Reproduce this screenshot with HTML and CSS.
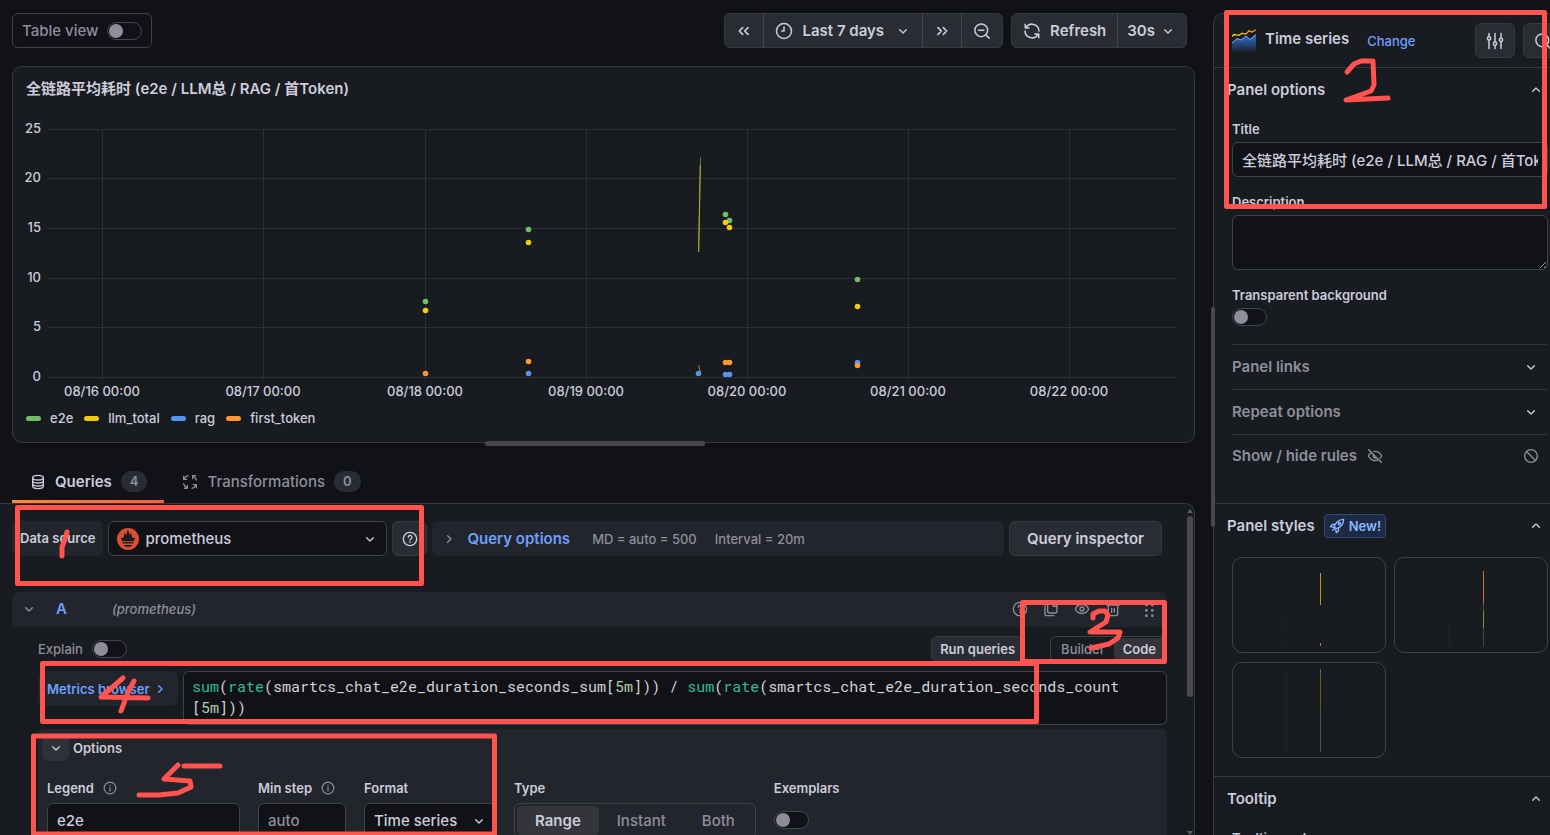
FILE: index.html
```html
<!DOCTYPE html>
<html lang="zh-CN">
<head>
<meta charset="UTF-8">
<meta name="viewport" content="width=device-width, initial-scale=1">
<title>Edit panel</title>
<link rel="stylesheet" href="styles.css">
</head>
<body>

<!-- Shared icons -->
<svg class="sprite" aria-hidden="true">
  <symbol id="i-down" viewBox="0 0 24 24"><path d="M7 10l5 5 5-5"/></symbol>
  <symbol id="i-up" viewBox="0 0 24 24"><path d="M7 14l5-5 5 5"/></symbol>
  <symbol id="i-right" viewBox="0 0 24 24"><path d="M10 7l5 5-5 5"/></symbol>
  <symbol id="i-dleft" viewBox="0 0 24 24"><path stroke-width="2.500" d="m10 7-5 5 5 5M18 7l-5 5 5 5"/></symbol>
  <symbol id="i-dright" viewBox="0 0 24 24"><path stroke-width="2.500" d="m6 7 5 5-5 5M14 7l5 5-5 5"/></symbol>
  <symbol id="i-clock" viewBox="0 0 24 24"><circle cx="12" cy="12" r="10"/><path d="M12 6.500V12H9"/></symbol>
  <symbol id="i-zoomout" viewBox="0 0 24 24"><circle cx="11" cy="11" r="8.500"/><path d="m17 17 4.500 4.500M7.500 11h7"/></symbol>
  <symbol id="i-search" viewBox="0 0 24 24"><circle cx="11" cy="11" r="8.500"/><path d="m17 17 4.500 4.500"/></symbol>
  <symbol id="i-sync" viewBox="0 0 24 24"><path d="M3 3v5h5M4 7.500A9.300 9.300 0 0 1 21.300 12M21 21v-5h-5M20 16.500A9.300 9.300 0 0 1 2.700 12"/></symbol>
  <symbol id="i-help" viewBox="0 0 24 24"><circle cx="12" cy="12" r="10"/><path d="M9.300 9.500a2.800 2.800 0 1 1 4 2.500c-.9.400-1.300.9-1.300 1.700M12 16.500v.6"/></symbol>
  <symbol id="i-info" viewBox="0 0 24 24"><circle cx="12" cy="12" r="10"/><path d="M12 11v6M12 7.300v.6"/></symbol>
  <symbol id="i-db" viewBox="0 0 24 24"><ellipse cx="12" cy="5.500" rx="8" ry="3.500"/><path d="M4 5.500v13C4 20.500 7.600 22 12 22s8-1.500 8-3.500v-13M4 10c0 2 3.600 3.500 8 3.500s8-1.500 8-3.500M4 14.500C4 16.500 7.600 18 12 18s8-1.500 8-3.500"/></symbol>
  <symbol id="i-process" viewBox="0 0 24 24"><path d="M2.500 3.500V8H7M3 7.500A10 10 0 0 1 9 2.500M20.500 2.500H16V7M16.500 3A10 10 0 0 1 21.500 9M21.500 20.500V16H17M21 16.500A10 10 0 0 1 15 21.500M3.500 21.500H8V17M7.500 21A10 10 0 0 1 2.500 15"/></symbol>
  <symbol id="i-copy" viewBox="0 0 24 24"><path d="M3 7v12a3 3 0 0 0 3 3h10M9 2h6l6 6v7a3 3 0 0 1-3 3h-8a3 3 0 0 1-3-3V4a2 2 0 0 1 2-2ZM15 2v6h6"/></symbol>
  <symbol id="i-eye" viewBox="0 0 24 24"><path d="M2 12c4-9 16-9 20 0-4 9-16 9-20 0Z"/><circle cx="12" cy="12" r="3"/></symbol>
  <symbol id="i-eyeoff" viewBox="0 0 24 24"><path d="M2.500 2.500l19 19M10.500 5.200C15 4.700 19.500 7 22 12a14 14 0 0 1-2.500 3.600M6.500 7A13 13 0 0 0 2 12c3 6 9 8.200 14.500 5.800M9.700 9.700a3.200 3.200 0 0 0 4.500 4.500"/></symbol>
  <symbol id="i-trash" viewBox="0 0 24 24"><path d="M2.500 6h19M8 6V4.500A2 2 0 0 1 10 2.500h4a2 2 0 0 1 2 2V6M5 6v13a3 3 0 0 0 3 3h8a3 3 0 0 0 3-3V6M10 11v6M14 11v6"/></symbol>
  <symbol id="i-grip" viewBox="0 0 24 24"><path class="dots" d="M8 6v.1M17 6v.1M8 14v.1M17 14v.1M8 22v.1M17 22v.1"/></symbol>
  <symbol id="i-ban" viewBox="0 0 24 24"><circle cx="12" cy="12" r="9.500"/><path d="m5.300 5.300 13.400 13.400"/></symbol>
  <symbol id="i-sliders" viewBox="0 0 24 24"><path d="M4 2v4M4 11v11M12 2v11M12 18v4M20 2v6M20 13v9"/><circle cx="4" cy="8.500" r="2.200"/><circle cx="12" cy="15.500" r="2.200"/><circle cx="20" cy="10.500" r="2.200"/></symbol>
  <symbol id="i-rocket" viewBox="0 0 24 24"><path d="M8 13c1.500-6 6-10.500 14-11-.3 8-5 12.500-11 14zM9 9.500l-4 .3L2 13l5 1M14.500 15l-.3 4L11 22l-1-5M8 16l-2.500 2.500"/><circle cx="15.500" cy="8.500" r="1.800"/></symbol>
</svg>

<div class="editor">
  <main class="main">
    <div class="topbar">
      <label class="table-view">Table view <input type="checkbox" class="switch"></label>
      <div class="tools">
        <div class="btn-group">
          <button class="btn" aria-label="Move back"><svg class="icon"><use href="#i-dleft"/></svg></button>
          <button class="btn btn-time"><svg class="icon icon-lg"><use href="#i-clock"/></svg><span>Last 7 days</span><svg class="icon"><use href="#i-down"/></svg></button>
          <button class="btn" aria-label="Move forward"><svg class="icon"><use href="#i-dright"/></svg></button>
          <button class="btn" aria-label="Zoom out"><svg class="icon icon-lg"><use href="#i-zoomout"/></svg></button>
        </div>
        <div class="btn-group">
          <button class="btn"><svg class="icon icon-lg"><use href="#i-sync"/></svg>Refresh</button>
          <button class="btn btn-interval">30s<svg class="icon"><use href="#i-down"/></svg></button>
        </div>
      </div>
    </div>

    <section class="panel">
      <h2 class="panel-title">全链路平均耗时 (e2e / LLM总 / RAG / 首Token)</h2>
      <svg class="chart" viewBox="0 0 1181 290" role="img" aria-label="Time series">
        <path class="grid" d="M35 17.500H1163M35 66.500H1163M35 116.500H1163M35 166.500H1163M35 215.500H1163M35 265.500H1163M89.500 17V268M250.500 17V268M412.500 17V268M573.500 17V268M734.500 17V268M895.500 17V268M1056.500 17V268"/>
        <g class="axis-y">
          <text x="28" y="21">25</text>
          <text x="28" y="70">20</text>
          <text x="28" y="120">15</text>
          <text x="28" y="170">10</text>
          <text x="28" y="219">5</text>
          <text x="28" y="269">0</text>
        </g>
        <g class="axis-x">
          <text x="89" y="284">08/16 00:00</text>
          <text x="250" y="284">08/17 00:00</text>
          <text x="412" y="284">08/18 00:00</text>
          <text x="573" y="284">08/19 00:00</text>
          <text x="734" y="284">08/20 00:00</text>
          <text x="895" y="284">08/21 00:00</text>
          <text x="1056" y="284">08/22 00:00</text>
        </g>
        <path class="line-e2e" d="M687.500 45 685.500 138"/>
        <path class="line-llm" d="M687.300 53 685.700 140"/>
        <path class="line-token" d="M685.500 253l2 8"/>
        <g class="e2e">
          <circle cx="412.500" cy="189.500" r="2.800"/><circle cx="515.500" cy="117.500" r="2.800"/><circle cx="712.500" cy="102.500" r="2.800"/><circle cx="716.500" cy="108.500" r="2.800"/><circle cx="844.500" cy="167.500" r="2.800"/>
        </g>
        <g class="llm">
          <circle cx="412.500" cy="198.500" r="2.800"/><circle cx="515.500" cy="130.500" r="2.800"/><circle cx="712.500" cy="110.500" r="2.800"/><circle cx="716.500" cy="115.500" r="2.800"/><circle cx="844.500" cy="194.500" r="2.800"/>
        </g>
        <g class="rag">
          <circle cx="515.500" cy="261.500" r="2.800"/><circle cx="685.500" cy="261.500" r="2.800"/><circle cx="712.500" cy="262.500" r="2.800"/><circle cx="716.500" cy="262.500" r="2.800"/><circle cx="844.500" cy="250.500" r="2.800"/>
        </g>
        <g class="token">
          <circle cx="412.500" cy="261.500" r="2.800"/><circle cx="515.500" cy="249.500" r="2.800"/><circle cx="712.500" cy="250.500" r="2.800"/><circle cx="716.500" cy="250.500" r="2.800"/><circle cx="844.500" cy="253.500" r="2.800"/>
        </g>
      </svg>
      <ul class="legend">
        <li><i class="swatch swatch-e2e"></i>e2e</li>
        <li><i class="swatch swatch-llm"></i>llm_total</li>
        <li><i class="swatch swatch-rag"></i>rag</li>
        <li><i class="swatch swatch-token"></i>first_token</li>
      </ul>
      <div class="resize-h"></div>
    </section>

    <div class="tabs" role="tablist">
      <button class="tab active" role="tab" aria-selected="true"><svg class="icon"><use href="#i-db"/></svg>Queries<span class="count">4</span></button>
      <button class="tab" role="tab" aria-selected="false"><svg class="icon"><use href="#i-process"/></svg>Transformations<span class="count">0</span></button>
    </div>

    <section class="queries">
      <div class="scroller">
        <div class="source-row">
          <label class="source-label" for="source">Data source</label>
          <div class="select source">
            <svg class="prom" viewBox="0 0 24 24" aria-hidden="true">
              <circle cx="12" cy="12" r="12" fill="#da4e31"/>
              <path fill="#181b1f" d="M6 14.500C4.500 12.700 4.700 11.500 4.500 10c1 1 1.800 1.200 2.600 1C7 8.500 8.500 7.500 8.300 5c1 .8 1.500 2 1.600 3.300C10.800 6.500 11 4.500 11.500 2c1.800 1.800 1.500 4 2.500 6 .2-1.200.5-2 1.100-2.800.2 2.300 1.600 3.300 1.800 5.800.9.100 1.800-.2 2.600-1-.2 1.500 0 2.700-1.500 4.500zM6 15.500h12v1.500H6zM7.500 18.500h9c-1.200 2.700-7.800 2.700-9 0z"/>
            </svg>
            <select id="source"><option>prometheus</option></select>
            <svg class="icon"><use href="#i-down"/></svg>
          </div>
          <button class="btn btn-square" aria-label="Data source help"><svg class="icon"><use href="#i-help"/></svg></button>
          <div class="query-options">
            <svg class="icon"><use href="#i-right"/></svg>
            <a href="#">Query options</a>
            <span>MD = auto = 500</span>
            <span>Interval = 20m</span>
          </div>
          <button class="btn btn-inspect">Query inspector</button>
        </div>

        <div class="query-head">
          <svg class="icon"><use href="#i-down"/></svg>
          <strong class="ref-id">A</strong>
          <em>(prometheus)</em>
          <div class="actions">
            <button aria-label="Help"><svg class="icon"><use href="#i-help"/></svg></button>
            <button aria-label="Duplicate"><svg class="icon"><use href="#i-copy"/></svg></button>
            <button aria-label="Hide response"><svg class="icon"><use href="#i-eye"/></svg></button>
            <button aria-label="Remove"><svg class="icon"><use href="#i-trash"/></svg></button>
            <button aria-label="Drag"><svg class="icon"><use href="#i-grip"/></svg></button>
          </div>
        </div>

        <div class="query-body">
          <div class="query-bar">
            <label class="explain">Explain <input type="checkbox" class="switch"></label>
            <button class="btn btn-sm">Run queries</button>
            <div class="radio radio-sm">
              <label><input type="radio" name="mode">Builder</label>
              <label><input type="radio" name="mode" checked>Code</label>
            </div>
          </div>

          <div class="code-row">
            <button class="metrics">Metrics browser<svg class="icon"><use href="#i-right"/></svg></button>
            <div class="code" role="textbox" aria-label="PromQL query" contenteditable="true" spellcheck="false"><span class="fn">sum</span>(<span class="fn">rate</span>(smartcs_chat_e2e_duration_seconds_sum[<span class="num">5m</span>])) / <span class="fn">sum</span>(<span class="fn">rate</span>(smartcs_chat_e2e_duration_seconds_count<br>[<span class="num">5m</span>]))</div>
          </div>

          <div class="options">
            <div class="options-head">
              <button aria-label="Collapse options"><svg class="icon"><use href="#i-down"/></svg></button>
              <span>Options</span>
            </div>
            <div class="fields">
              <div class="field field-legend">
                <label for="legend">Legend <svg class="icon"><use href="#i-info"/></svg></label>
                <input id="legend" class="input" type="text" value="e2e">
              </div>
              <div class="field field-step">
                <label for="step">Min step <svg class="icon"><use href="#i-info"/></svg></label>
                <input id="step" class="input" type="text" placeholder="auto">
              </div>
              <div class="field field-format">
                <label for="format">Format</label>
                <div class="select">
                  <select id="format"><option>Time series</option></select>
                  <svg class="icon"><use href="#i-down"/></svg>
                </div>
              </div>
              <div class="field">
                <span class="field-label">Type</span>
                <div class="radio">
                  <label><input type="radio" name="type" checked>Range</label>
                  <label><input type="radio" name="type">Instant</label>
                  <label><input type="radio" name="type">Both</label>
                </div>
              </div>
              <div class="field">
                <label for="exemplars">Exemplars</label>
                <input id="exemplars" type="checkbox" class="switch">
              </div>
            </div>
          </div>
        </div>
      </div>
      <div class="scrollbar"><i class="arrow-up"></i><i class="thumb"></i><i class="arrow-down"></i></div>
    </section>
  </main>

  <aside class="side">
    <div class="resize-v"></div>
    <div class="side-head">
      <svg class="viz" viewBox="0 0 24 24" aria-hidden="true">
        <defs><linearGradient id="area" x1="0" y1="0" x2="0" y2="1"><stop offset="0" stop-color="#3274d9"/><stop offset="1" stop-color="#3274d9" stop-opacity="0"/></linearGradient><linearGradient id="top"><stop offset="0" stop-color="#f2cc0c"/><stop offset="1" stop-color="#ff9830"/></linearGradient></defs>
        <path fill="url(#area)" d="M0 14 5 9.500l4 1.500 5-4 4 3.500 6-5V24H0z"/>
        <path fill="none" stroke="#84aff1" d="M0 14 5 9.500l4 1.500 5-4 4 3.500 6-5"/>
        <path fill="none" stroke="url(#top)" stroke-width="1.300" d="M0 7.500 2 5.500l5 .8 3-2 4 .8 3-3.300 3 1.200L24 .8"/>
      </svg>
      <h2>Time series</h2>
      <a href="#">Change</a>
      <div class="side-buttons">
        <button class="btn" aria-label="Options view"><svg class="icon icon-lg"><use href="#i-sliders"/></svg></button>
        <button class="btn" aria-label="Search options"><svg class="icon icon-lg"><use href="#i-search"/></svg></button>
      </div>
    </div>

    <section class="group">
      <h3 class="group-head">Panel options<svg class="icon"><use href="#i-up"/></svg></h3>
      <div class="group-body">
        <label class="side-label" for="title">Title</label>
        <input id="title" class="input" type="text" value="全链路平均耗时 (e2e / LLM总 / RAG / 首Token)">
        <label class="side-label spaced" for="description">Description</label>
        <textarea id="description" class="input"></textarea>
        <label class="side-label spaced" for="transparent">Transparent background</label>
        <input id="transparent" type="checkbox" class="switch">
        <div class="sub">Panel links<svg class="icon"><use href="#i-down"/></svg></div>
        <div class="sub">Repeat options<svg class="icon"><use href="#i-down"/></svg></div>
        <div class="sub sub-rules">Show / hide rules<svg class="icon"><use href="#i-eyeoff"/></svg><svg class="icon"><use href="#i-ban"/></svg></div>
      </div>
    </section>

    <section class="group">
      <h3 class="group-head">Panel styles<span class="badge"><svg class="icon"><use href="#i-rocket"/></svg>New!</span><svg class="icon"><use href="#i-up"/></svg></h3>
      <div class="presets">
        <button class="preset" aria-label="Style 1"><svg viewBox="0 0 152 94"><path stroke="#73bf69" d="M87.500 15v3"/><path stroke="#b39a12" d="M87.500 18v29"/><path stroke="#c4762b" d="M87.500 85v3"/><path stroke="#22302a" d="M53.500 63v1m0 2v1m0 20v1"/></svg></button>
        <button class="preset" aria-label="Style 2"><svg viewBox="0 0 152 94"><path stroke="#c4762b" d="M88.500 13v31"/><path stroke="#4a6d9c" d="M88.500 44v2"/><path stroke="#5c5018" d="M88.500 46v7"/><path stroke="#6f9740" d="M88.500 53v17"/><path stroke="#33532f" d="M88.500 70v19"/><path stroke="#212c25" d="M54.500 66v22"/></svg></button>
        <button class="preset" aria-label="Style 3"><svg viewBox="0 0 152 94"><path stroke="#4a6d9c" d="M87.500 6v5"/><path stroke="#6b581a" d="M87.500 11v36"/><path stroke="#3b6136" d="M87.500 47v42"/><path stroke="#1d2622" d="M53.500 7v82"/></svg></button>
      </div>
    </section>

    <section class="group">
      <h3 class="group-head">Tooltip<svg class="icon"><use href="#i-up"/></svg></h3>
      <div class="group-body">
        <span class="side-label">Tooltip mode</span>
      </div>
    </section>
  </aside>
</div>

<!-- Numbered walkthrough marks over the page -->
<svg class="marks" viewBox="0 0 1550 835" aria-hidden="true">
  <rect x="17.500" y="507.500" width="404" height="76"/>
  <rect x="1226.500" y="12.500" width="318" height="194"/>
  <rect x="1022.500" y="602.500" width="142" height="59"/>
  <rect x="42.500" y="663.500" width="994" height="58"/>
  <rect x="33.500" y="736" width="461" height="98"/>
  <path d="M67 532 65 539 62 547V556"/>
  <path d="M1347 72 1354 64 1361 61H1373L1374 85 1371 91 1346 100 1388 98"/>
  <path d="M1093 618V614L1099 611H1105L1108 615 1106 622 1090 632H1120L1118 638 1109 644 1091 648"/>
  <path d="M123 678 101 697 148 698M134 681 128 692 121 711"/>
  <path d="M220 766H184M178 765 164 779 190 781 191 787 178 793 159 795H139"/>
</svg>

</body>
</html>
```

FILE: styles.css
```css
* {
  box-sizing: border-box;
}

body {
  margin: 0;
  height: 100vh;
  overflow: hidden;
  position: relative;
  background: #111217;
  color: #ccccdc;
  font-family: Inter, "Noto Sans CJK SC", sans-serif;
  font-size: 15px;
  line-height: 20px;
}

button, input, select, textarea {
  font: inherit;
  color: inherit;
}

button {
  padding: 0;
  border: 0;
  background: none;
  cursor: pointer;
}

a {
  color: #6e9fff;
  text-decoration: none;
}

h2, h3 {
  margin: 0;
  font-size: 15px;
  font-weight: 600;
}

.sprite {
  display: none;
}

.icon {
  width: 16px;
  height: 16px;
  flex: none;
  fill: none;
  stroke: currentColor;
  stroke-width: 2;
  stroke-linecap: round;
  stroke-linejoin: round;
}

.icon-lg {
  width: 18px;
  height: 18px;
}

.dots {
  stroke-width: 4;
}

/* Layout */
.editor {
  display: grid;
  grid-template-columns: minmax(0, 1fr) 337px;
  gap: 18px;
  height: 100%;
}

.main {
  display: flex;
  flex-direction: column;
  min-width: 0;
  height: 100vh;
}

/* Controls */
.btn {
  display: flex;
  align-items: center;
  justify-content: center;
  height: 35px;
  padding: 0 11px;
  background: #2a2c33;
  border: 1px solid #37393f;
  border-radius: 6px;
  font-weight: 600;
}

.btn-group {
  display: flex;
}

.btn-group .btn {
  gap: 9px;
  border-radius: 0;
}

.btn-group .btn + .btn {
  border-left-color: #45474d;
  margin-left: -1px;
}

.btn-group .btn:first-child {
  border-radius: 6px 0 0 6px;
}

.btn-group .btn:last-child {
  border-radius: 0 6px 6px 0;
}

.btn-group .btn-interval {
  padding: 0 10px 0 9px;
  gap: 5px;
}

.switch {
  appearance: none;
  width: 35px;
  height: 18px;
  margin: 0;
  padding: 1px;
  background: #111217;
  border: 1px solid #44464c;
  border-radius: 9px;
  flex: none;
}

.switch::before {
  content: "";
  display: block;
  width: 14px;
  height: 14px;
  border-radius: 50%;
  background: #8e8e9b;
}

.input,
.select select {
  display: block;
  width: 100%;
  height: 35px;
  padding: 0 9px;
  background: #111217;
  border: 1px solid #404248;
  border-radius: 6px;
}

.side .input {
  font-weight: 500;
}

.input::placeholder {
  color: #8e8e9b;
  opacity: 1;
}

.select {
  position: relative;
}

.select select {
  appearance: none;
}

.select .icon {
  position: absolute;
  right: 9px;
  top: 10px;
  pointer-events: none;
}

.radio {
  display: flex;
  height: 35px;
  padding: 2px;
  border: 1px solid #404248;
  border-radius: 6px;
  color: #8e8e9b;
}

.radio label {
  display: flex;
  align-items: center;
  padding: 0 18px;
  border-radius: 4px;
  font-weight: 500;
}

.radio input {
  position: absolute;
  opacity: 0;
}

.radio label:has(:checked) {
  background: #33353b;
  color: #ccccdc;
  font-weight: 600;
}

/* Top bar */
.topbar {
  display: flex;
  justify-content: space-between;
  padding: 13px 8px 18px 12px;
}

.table-view {
  display: flex;
  align-items: center;
  gap: 9px;
  height: 35px;
  padding: 0 9px;
  border: 1px solid #404248;
  border-radius: 6px;
  color: #8e8e9b;
  font-weight: 500;
}

.tools {
  display: flex;
  gap: 8px;
}

.btn-time .icon:last-child {
  margin-left: 2px;
}

/* Chart panel */
.panel {
  position: relative;
  margin-left: 12px;
  height: 377px;
  flex: none;
  background: #181b1f;
  border: 1px solid #37393f;
  border-radius: 10px;
}

.panel-title {
  padding: 12px 13px 13px;
}

.chart {
  display: block;
  width: 100%;
  font-size: 13px;
  font-weight: 500;
}

.grid {
  stroke: #2d3033;
}

.axis-x, .axis-y {
  fill: #ccccdc;
}

.axis-x text {
  text-anchor: middle;
}

.axis-y text {
  text-anchor: end;
}

.e2e { fill: #73bf69; }
.llm { fill: #f2cc0c; }
.rag { fill: #5794f2; }
.token { fill: #ff9830; }

.line-e2e { stroke: #4d7f35; }
.line-llm { stroke: #c2ae2a; }
.line-token { stroke: #b87434; }

.legend {
  display: flex;
  gap: 11px;
  margin: 6px 13px 0;
  padding: 0;
  list-style: none;
  font-size: 13px;
  font-weight: 500;
}

.legend li {
  display: flex;
  align-items: center;
  gap: 9px;
}

.swatch {
  width: 15px;
  height: 5px;
  border-radius: 3px;
}

.swatch-e2e { background: #73bf69; }
.swatch-llm { background: #f2cc0c; }
.swatch-rag { background: #5794f2; }
.swatch-token { background: #ff9830; }

.resize-h {
  position: absolute;
  bottom: -4px;
  left: 40%;
  width: 220px;
  height: 5px;
  border-radius: 3px;
  background: #47484d;
}

/* Tabs */
.tabs {
  display: flex;
  flex: none;
  margin: 17px 0 0 12px;
}

.tab {
  display: flex;
  align-items: center;
  height: 43px;
  padding: 3px 17px 0 18px;
  border-bottom: 3px solid transparent;
  color: #8e8e9b;
  font-weight: 500;
}

.tab .icon {
  margin-right: 9px;
}

.tab.active {
  color: #ccccdc;
  font-weight: 600;
  border-image: linear-gradient(90deg, #ff8833, #f55f3e) 1;
}

.count {
  margin-left: 9px;
  padding: 0 9px;
  border-radius: 10px;
  background: #2a2c33;
  color: #8e8e9b;
  font-size: 13px;
  font-weight: 600;
  line-height: 21px;
}

/* Queries */
.queries {
  display: flex;
  flex: 1;
  min-height: 0;
  background: #181b1f;
  border: 1px solid #37393f;
  border-width: 1px 1px 0 0;
  border-radius: 0 10px 0 0;
}

.scroller {
  flex: 1;
  min-width: 0;
  padding: 17px 18px 0 12px;
  overflow: hidden;
}

.scrollbar {
  display: flex;
  flex-direction: column;
  align-items: center;
  gap: 3px;
  width: 9px;
  padding-top: 5px;
}

.arrow-up, .arrow-down {
  border: 3px solid transparent;
}

.arrow-up {
  border-top: 0;
  border-bottom: 4px solid #5b5d63;
}

.arrow-down {
  margin-top: auto;
  border-bottom: 0;
  border-top: 4px solid #5b5d63;
}

.thumb {
  width: 6px;
  height: 181px;
  border-radius: 3px;
  background: #4a4b51;
}

.source-row {
  display: flex;
  gap: 5px;
  padding-right: 5px;
}

.source-label {
  padding: 0 8px;
  border-radius: 6px;
  background: #22252b;
  font-size: 13px;
  font-weight: 600;
  line-height: 35px;
}

.source {
  width: 279px;
}

.source select {
  padding-left: 36px;
  font-weight: 500;
}

.prom {
  position: absolute;
  left: 9px;
  top: 7px;
  width: 22px;
  height: 22px;
  pointer-events: none;
}

.btn-square {
  width: 35px;
}

.query-options {
  display: flex;
  flex: 1;
  align-items: center;
  padding: 0 9px;
  border-radius: 6px;
  background: #22252b;
  color: #8e8e9b;
  font-size: 13px;
  font-weight: 500;
}

.query-options a {
  margin: 0 4px 0 10px;
  font-size: 15px;
  font-weight: 600;
}

.query-options span {
  margin-left: 18px;
}

.btn-inspect {
  padding: 0 17px;
}

.query-head {
  display: flex;
  align-items: center;
  height: 35px;
  margin-top: 36px;
  padding: 0 10px 1px 9px;
  border-radius: 6px;
  background: #22252b;
  color: #8e8e9b;
  font-size: 13px;
  font-weight: 500;
}

.ref-id {
  margin: 0 45px 0 19px;
  color: #6e9fff;
  font-size: 15px;
  font-weight: 600;
}

.actions {
  display: flex;
  gap: 15px;
  margin-left: auto;
}

.actions button {
  display: flex;
}

.actions button:last-child {
  margin-left: 5px;
}

.query-body {
  padding: 9px 0 0 26px;
}

.query-bar {
  display: flex;
  align-items: center;
  height: 26px;
  font-size: 13px;
}

.explain {
  display: flex;
  align-items: center;
  gap: 9px;
  margin-right: auto;
  color: #8e8e9b;
  font-weight: 500;
}

.btn-sm {
  height: 26px;
  padding: 0 8px;
}

.radio-sm {
  height: 26px;
  margin-left: 26px;
  padding: 1px;
}

.radio-sm label {
  padding: 0 9px;
}

.code-row {
  display: flex;
  align-items: flex-start;
  gap: 5px;
  margin-top: 9px;
}

.metrics {
  display: flex;
  align-items: center;
  gap: 2px;
  min-width: 140px;
  height: 35px;
  padding: 0 9px;
  border-radius: 6px;
  background: #22252b;
  color: #6e9fff;
  font-size: 13px;
  font-weight: 600;
  white-space: nowrap;
}

.code {
  flex: 1;
  min-width: 0;
  min-height: 54px;
  padding: 4px 8px;
  background: #111217;
  border: 1px solid #404248;
  border-radius: 6px;
  color: #d4d4d4;
  font-family: "Roboto Mono", "Liberation Mono", monospace;
  line-height: 21px;
}

.fn { color: #2dbd95; }
.num { color: #b5cea8; }

.options {
  margin-top: 4px;
  padding: 6px 4px 20px;
  border-radius: 6px;
  background: #22252b;
  font-size: 13px;
  font-weight: 600;
}

.options-head {
  display: flex;
  align-items: center;
  gap: 4px;
}

.options-head button {
  display: flex;
  align-items: center;
  justify-content: center;
  width: 27px;
  height: 26px;
  border-radius: 6px;
  background: #2f3138;
}

.fields {
  display: flex;
  gap: 18px;
  padding: 17px 5px 0;
}

.field > label,
.field-label {
  display: flex;
  align-items: center;
  gap: 9px;
  height: 20px;
  margin-bottom: 5px;
}

.field > label .icon {
  width: 14px;
  height: 14px;
  color: #8e8e9b;
}

.field .input,
.field select,
.field .radio {
  font-size: 15px;
  font-weight: 500;
}

.field-legend { width: 193px; }
.field-step { width: 88px; }
.field-format { width: 132px; }

.field .switch {
  display: block;
  margin-top: 13px;
}

/* Options sidebar */
.side {
  position: relative;
  height: 100vh;
  padding-top: 13px;
}

.side-head {
  display: flex;
  align-items: center;
  height: 55px;
  padding-left: 18px;
  background: #181b1f;
  border: 1px solid #37393f;
  border-right: 0;
  border-radius: 10px 0 0 0;
}

.viz {
  width: 24px;
  height: 24px;
  flex: none;
}

.side-head h2 {
  margin: 0 18px 0 9px;
  padding-bottom: 3px;
  white-space: nowrap;
}

.side-head a {
  font-size: 13px;
  font-weight: 500;
}

.side-buttons {
  display: flex;
  gap: 8px;
  margin-left: auto;
  margin-right: -13px;
}

.side-buttons .btn {
  width: 40px;
  padding: 0;
}

.group {
  background: #181b1f;
  border-left: 1px solid #37393f;
  border-bottom: 1px solid #37393f;
}

.group-head {
  display: flex;
  align-items: center;
  height: 44px;
  padding: 0 6px 0 13px;
}

.group-head > .icon {
  margin-left: auto;
}

.group-body {
  padding: 7px 2px 0 18px;
}

.side-label {
  display: block;
  margin-bottom: 3px;
  font-size: 13px;
  font-weight: 600;
}

.spaced {
  margin-top: 15px;
}

textarea.input {
  height: 55px;
}

.group-body .spaced + .switch {
  display: block;
  margin-bottom: 18px;
}

.sub {
  display: flex;
  align-items: center;
  height: 45px;
  padding-right: 9px;
  border-top: 1px solid #303238;
  color: #8e8e9b;
  font-weight: 600;
}

.sub .icon:last-child {
  margin-left: auto;
}

.sub:not(.sub-rules) .icon {
  color: #ccccdc;
}

.sub-rules {
  height: 69px;
  padding-bottom: 26px;
  gap: 10px;
}

.badge {
  display: flex;
  align-items: center;
  gap: 4px;
  height: 24px;
  margin-left: 9px;
  padding: 0 4px;
  background: #1d2a42;
  border: 1px solid #2f4a7c;
  border-radius: 4px;
  color: #8ab8ff;
  font-size: 13px;
}

.presets {
  display: grid;
  grid-template-columns: 1fr 1fr;
  gap: 9px 8px;
  padding: 9px 2px 18px 18px;
}

.preset {
  display: block;
  border: 1px solid #404248;
  border-radius: 10px;
}

.preset svg {
  display: block;
  width: 100%;
}

.resize-v {
  position: absolute;
  left: -2px;
  top: 307px;
  width: 4px;
  height: 220px;
  border-radius: 2px;
  background: #47484d;
}

/* Marks */
.marks {
  position: absolute;
  top: 0;
  left: 0;
  width: 100%;
  pointer-events: none;
  fill: none;
  stroke: #ff5350;
  stroke-width: 5;
  stroke-linecap: round;
  stroke-linejoin: round;
}
```
